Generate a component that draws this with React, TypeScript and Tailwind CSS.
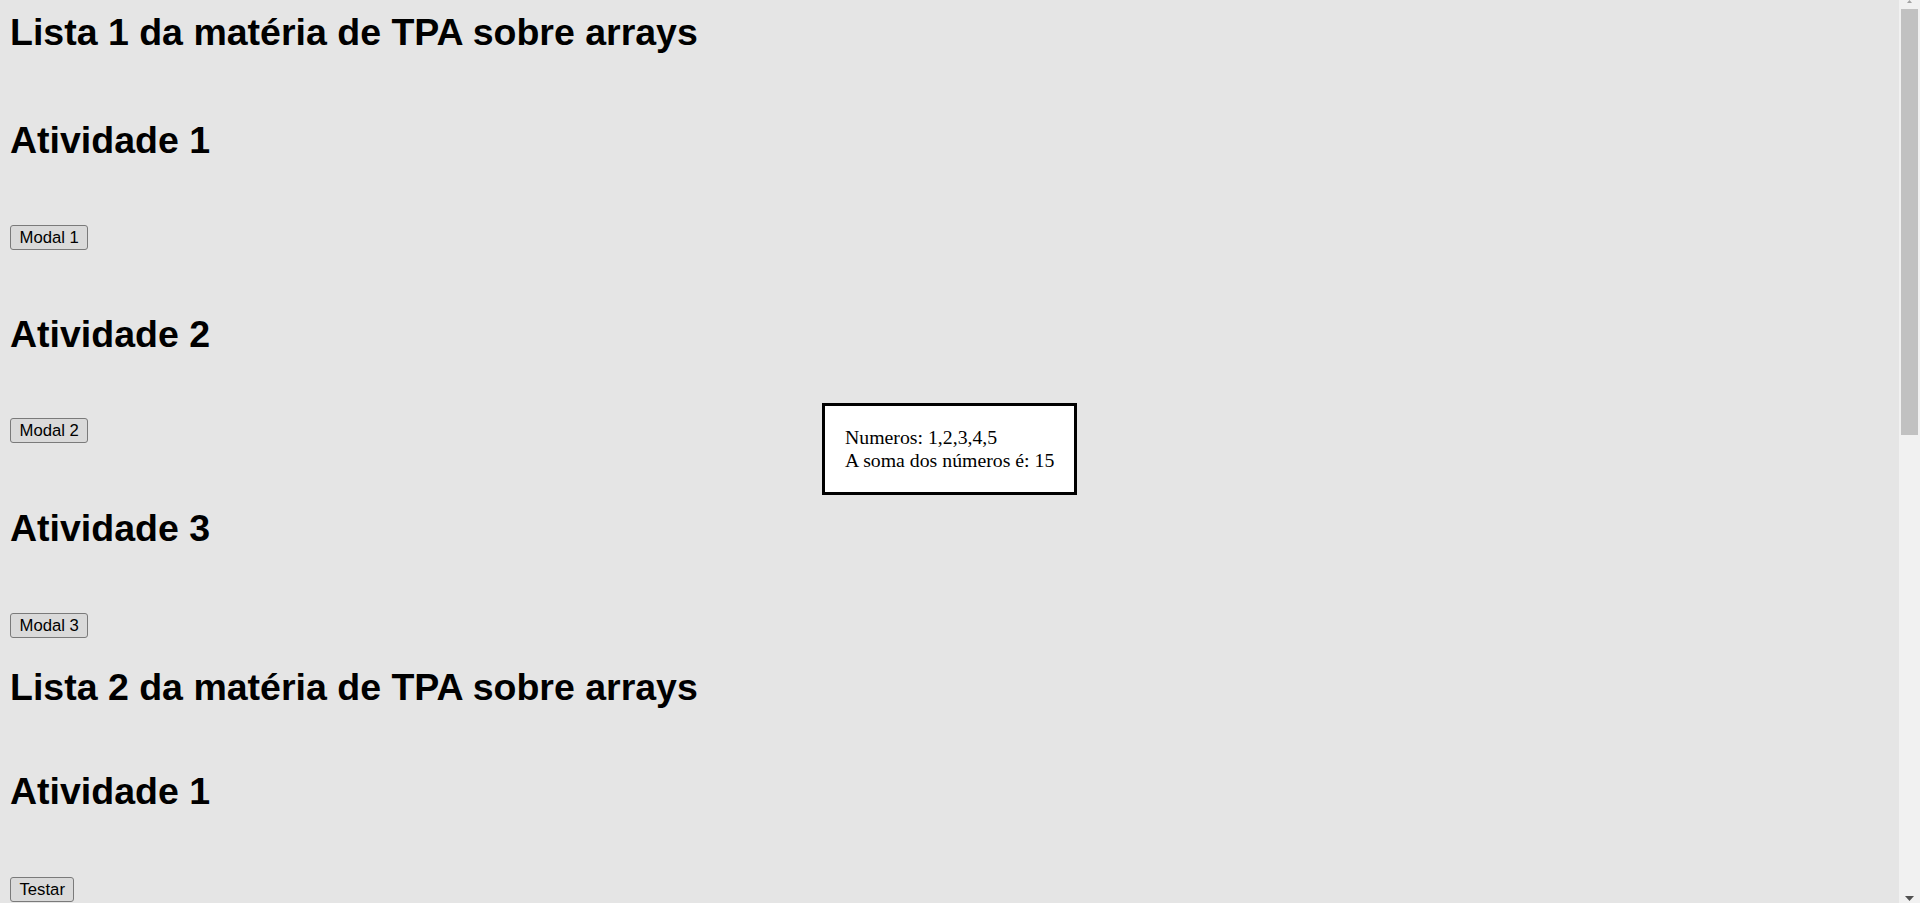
import React from "react";

const headingCls =
  "m-0 text-[37.5px] leading-[43px] font-bold text-black whitespace-nowrap [font-family:'Liberation_Sans',Arial,sans-serif]";
const buttonCls =
  "h-[25px] px-[8.5px] border border-[#7a7a7a] rounded-[3px] bg-[#dadada] text-[16.7px] leading-[19px] text-black [font-family:'Liberation_Sans',Arial,sans-serif]";

export default function App() {
  return (
    <div className="w-[1920px] h-[903px] overflow-hidden flex bg-[#e5e5e5]">
      <div className="relative w-[1899px] h-[903px] overflow-hidden">
        <div className="flex flex-col items-start pl-[10px] pt-[11px]">
          <h1 className={headingCls}>Lista 1 da matéria de TPA sobre arrays</h1>
          <h2 className={headingCls + " mt-[65px]"}>Atividade 1</h2>
          <button className={buttonCls + " mt-[63px]"}>Modal 1</button>
          <h2 className={headingCls + " mt-[63px]"}>Atividade 2</h2>
          <button className={buttonCls + " mt-[62px]"}>Modal 2</button>
          <h2 className={headingCls + " mt-[64px]"}>Atividade 3</h2>
          <button className={buttonCls + " mt-[63px]"}>Modal 3</button>
          <h1 className={headingCls + " mt-[28px]"}>Lista 2 da matéria de TPA sobre arrays</h1>
          <h2 className={headingCls + " mt-[61px]"}>Atividade 1</h2>
          <button className={buttonCls + " mt-[64px]"}>Testar</button>
        </div>
        <div className="absolute left-[822px] top-[403px] bg-white border-[3px] border-black px-[20px] py-[20px] text-[19.8px] leading-[23px] text-black whitespace-nowrap [font-family:'Liberation_Serif','Times_New_Roman',serif]">
          <div>Numeros: 1,2,3,4,5</div>
          <div>A soma dos números é: 15</div>
        </div>
      </div>
      <div className="relative w-[21px] h-[903px] bg-[#f1f1f1] flex flex-col items-center">
        <svg width="9" height="3" viewBox="0 0 9 3" className="block">
          <polygon points="2,3 7,3 4.5,0" fill="#a3a3a3" />
        </svg>
        <div className="mt-[6px] w-[17px] h-[426px] bg-[#c1c1c1]" />
        <div className="flex-1" />
        <svg width="9" height="5" viewBox="0 0 9 5" className="block mb-[2px]">
          <polygon points="0,0 9,0 4.5,5" fill="#505050" />
        </svg>
      </div>
    </div>
  );
}
